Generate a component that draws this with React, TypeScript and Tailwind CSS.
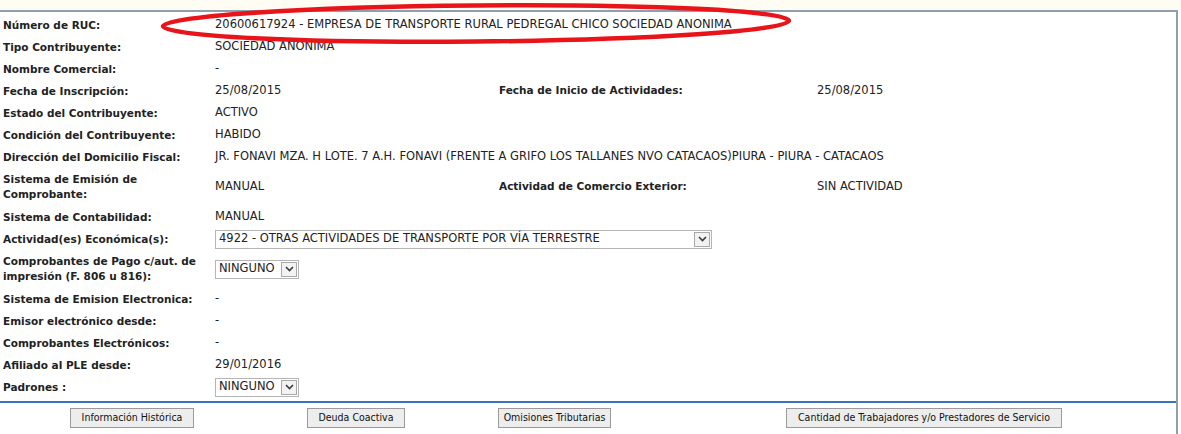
import { ReactNode } from 'react'

type Row = { label: ReactNode; value: ReactNode; label2?: string; value2?: string; tall?: boolean }

function Select({ text, wide }: { text: string; wide?: boolean }) {
  return (
    <div className={`flex items-center h-[19px] border border-[#b5b5b5] bg-white ${wide ? 'w-[497px]' : 'w-[84px]'}`}>
      <span className="flex-1 pl-[3px] whitespace-nowrap overflow-hidden">{text}</span>
      <span className="w-[16px] h-[15px] mr-[1px] border border-[#a9a9a9] bg-[#f2f2f2] flex items-center justify-center">
        <svg width="9" height="6" viewBox="0 0 9 6">
          <path d="M1 1 L4.5 4.5 L8 1" fill="none" stroke="#3a3a3a" strokeWidth="1.6" />
        </svg>
      </span>
    </div>
  )
}

const ROWS: Row[] = [
  { label: 'Número de RUC:', value: '20600617924 - EMPRESA DE TRANSPORTE RURAL PEDREGAL CHICO SOCIEDAD ANONIMA' },
  { label: 'Tipo Contribuyente:', value: 'SOCIEDAD ANONIMA' },
  { label: 'Nombre Comercial:', value: '-' },
  { label: 'Fecha de Inscripción:', value: '25/08/2015', label2: 'Fecha de Inicio de Actividades:', value2: '25/08/2015' },
  { label: 'Estado del Contribuyente:', value: 'ACTIVO' },
  { label: 'Condición del Contribuyente:', value: 'HABIDO' },
  { label: 'Dirección del Domicilio Fiscal:', value: 'JR. FONAVI MZA. H LOTE. 7 A.H. FONAVI (FRENTE A GRIFO LOS TALLANES NVO CATACAOS)PIURA - PIURA - CATACAOS' },
  { label: 'Sistema de Emisión de Comprobante:', value: 'MANUAL', label2: 'Actividad de Comercio Exterior:', value2: 'SIN ACTIVIDAD', tall: true },
  { label: 'Sistema de Contabilidad:', value: 'MANUAL' },
  { label: 'Actividad(es) Económica(s):', value: <Select text="4922 - OTRAS ACTIVIDADES DE TRANSPORTE POR VÍA TERRESTRE" wide /> },
  { label: 'Comprobantes de Pago c/aut. de impresión (F. 806 u 816):', value: <Select text="NINGUNO" />, tall: true },
  { label: 'Sistema de Emision Electronica:', value: '-' },
  { label: 'Emisor electrónico desde:', value: '-' },
  { label: 'Comprobantes Electrónicos:', value: '-' },
  { label: 'Afiliado al PLE desde:', value: '29/01/2016' },
  { label: 'Padrones :', value: <Select text="NINGUNO" /> },
]

export default function App() {
  return (
    <div className="w-[1181px] h-[434px] bg-white text-[11.5px] text-[#222] overflow-hidden" style={{ fontFamily: '"DejaVu Sans", Verdana, sans-serif' }}>
      <div className="h-[10px] bg-[#fffcf3]" />
      <div className="relative w-[1178px] border-t-2 border-r-2 border-[#8e9fae]">
        <div className="pt-[2px] pb-[3px]">
          {ROWS.map((r, i) => (
            <div key={i} className={`flex items-center ${r.tall ? 'h-[38px]' : 'h-[22px]'}`}>
              <div className="w-[215px] pl-[3px] pr-[6px] font-bold text-[10.5px] leading-[15px]">{r.label}</div>
              <div className={r.label2 ? 'w-[284px]' : 'flex-1 whitespace-nowrap'}>{r.value}</div>
              {r.label2 && (
                <>
                  <div className="w-[318px] font-bold text-[10.5px]">{r.label2}</div>
                  <div className="flex-1">{r.value2}</div>
                </>
              )}
            </div>
          ))}
        </div>
        <div className="h-[2px] bg-[#3b72bd]" />
        <div className="flex items-center h-[31px] pb-[2px] text-[10.5px] text-[#111]" style={{ fontFamily: '"DejaVu Sans Condensed", Tahoma, sans-serif' }}>
          {[
            ['Información Histórica', 'ml-[70px] w-[124px]'],
            ['Deuda Coactiva', 'ml-[113px] w-[98px]'],
            ['Omisiones Tributarias', 'ml-[93px] w-[113px]'],
            ['Cantidad de Trabajadores y/o Prestadores de Servicio', 'ml-[175px] w-[276px]'],
          ].map(([t, c]) => (
            <button key={t} className={`${c} h-[20px] border border-[#9a9a9a] bg-[#ededed] whitespace-nowrap`}>{t}</button>
          ))}
        </div>
        <svg className="absolute left-[158px] top-[-10px] pointer-events-none" width="640" height="46" viewBox="0 0 640 46">
          <ellipse cx="318" cy="21.5" rx="313" ry="18" fill="none" stroke="#e8141a" strokeWidth="4.5" transform="rotate(-0.5 318 21.5)" />
        </svg>
      </div>
    </div>
  )
}
